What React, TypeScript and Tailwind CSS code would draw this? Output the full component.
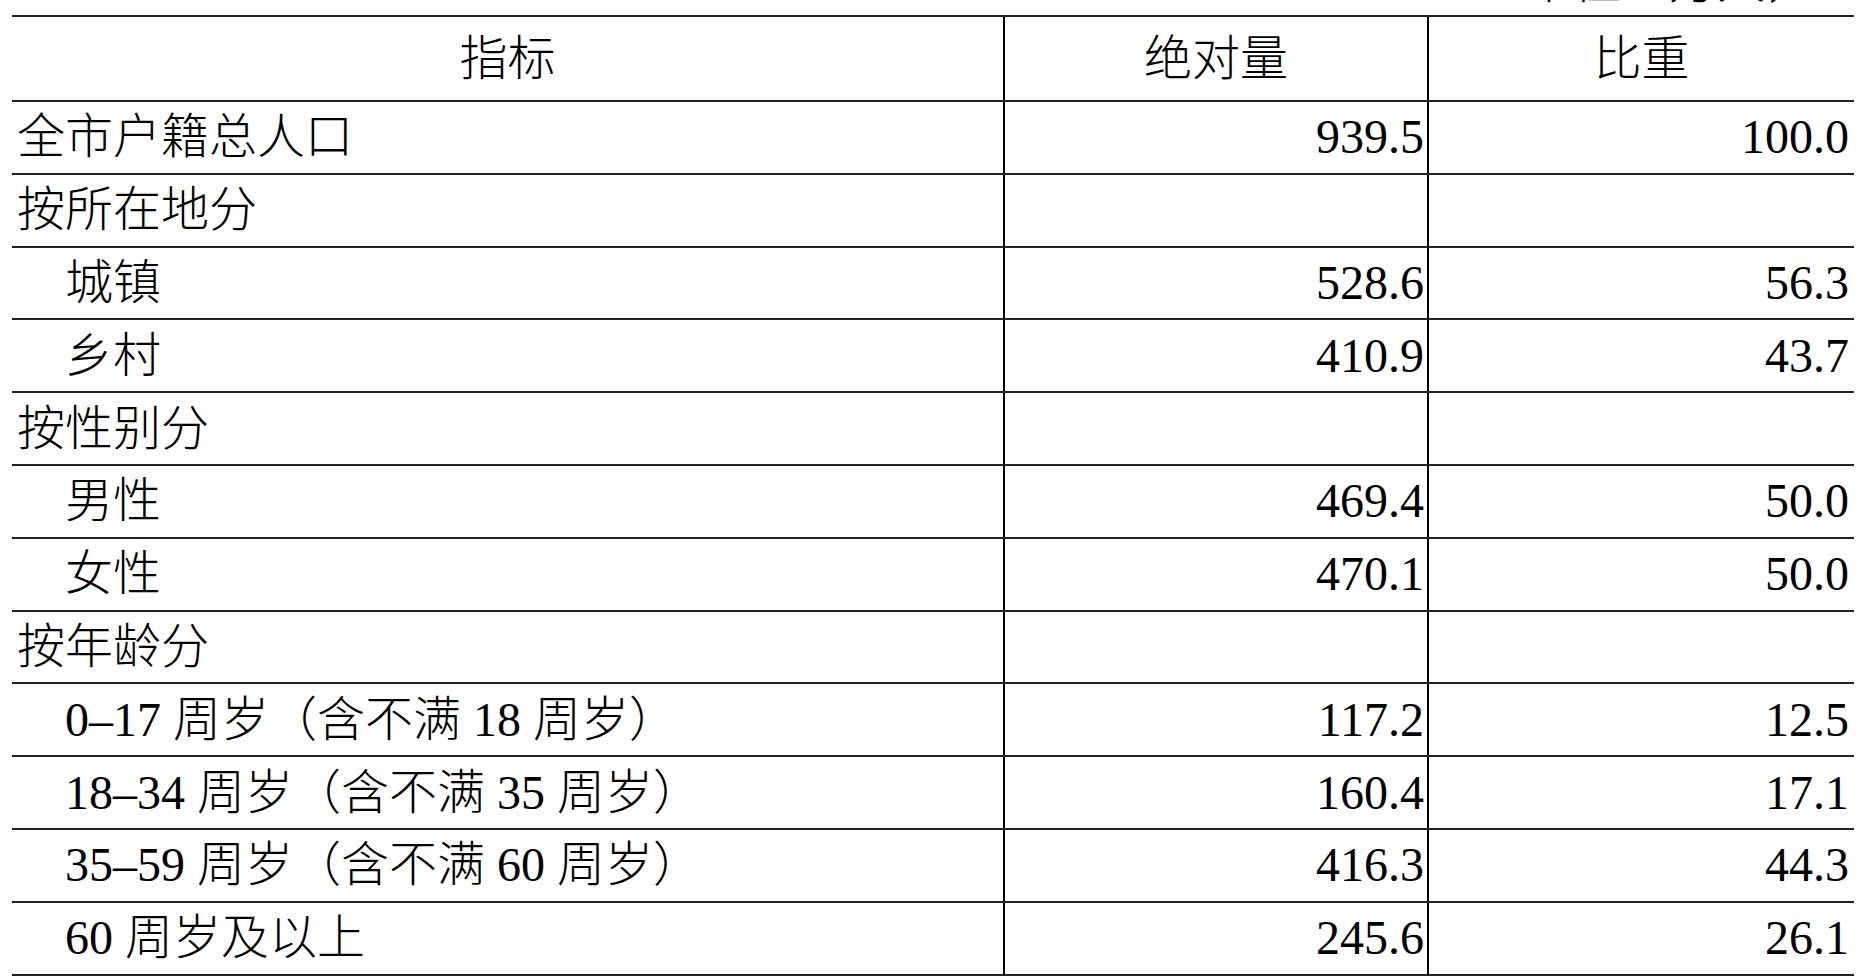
import React from "react";

type Row = {
  label: string;
  indent?: boolean;
  amount?: string;
  share?: string;
};

const rows: Row[] = [
  { label: "全市户籍总人口", amount: "939.5", share: "100.0" },
  { label: "按所在地分" },
  { label: "城镇", indent: true, amount: "528.6", share: "56.3" },
  { label: "乡村", indent: true, amount: "410.9", share: "43.7" },
  { label: "按性别分" },
  { label: "男性", indent: true, amount: "469.4", share: "50.0" },
  { label: "女性", indent: true, amount: "470.1", share: "50.0" },
  { label: "按年龄分" },
  { label: "0–17 周岁（含不满 18 周岁）", indent: true, amount: "117.2", share: "12.5" },
  { label: "18–34 周岁（含不满 35 周岁）", indent: true, amount: "160.4", share: "17.1" },
  { label: "35–59 周岁（含不满 60 周岁）", indent: true, amount: "416.3", share: "44.3" },
  { label: "60 周岁及以上", indent: true, amount: "245.6", share: "26.1" },
];

const font = "font-['Liberation_Serif','Noto_Sans_CJK_SC',serif]";

export default function App() {
  return (
    <div className={`h-[976px] w-[1863px] overflow-hidden bg-white text-black ${font} text-[48px] leading-none`}>
      {/* caption, mostly cut off by the top of the page */}
      <div className="flex h-[15px] items-end justify-end overflow-hidden pr-[10px]">
        <span className="mb-[9px] font-light">单位：万人，%</span>
      </div>

      <div className="ml-[12px] w-[1842px] border-t-2 border-[#222]">
        {/* Header */}
        <div className="flex h-[85px] border-b-2 border-[#222]">
          <div className="flex w-[993px] items-center justify-center border-r-2 border-black font-light">
            指标
          </div>
          <div className="flex w-[424px] items-center justify-center border-r-2 border-black font-light">
            绝对量
          </div>
          <div className="flex flex-1 items-center justify-center font-light">比重</div>
        </div>

        {/* Body */}
        {rows.map((row) => (
          <div key={row.label} className="flex h-[72.8px] border-b-2 border-[#222]">
            <div
              className={`flex w-[993px] items-center border-r-2 border-black font-light ${
                row.indent ? "pl-[53px]" : "pl-[5px]"
              }`}
            >
              {row.label}
            </div>
            <div className="flex w-[424px] items-center justify-end border-r-2 border-black pr-[3px]">
              {row.amount}
            </div>
            <div className="flex flex-1 items-center justify-end pr-[5px]">{row.share}</div>
          </div>
        ))}
      </div>
    </div>
  );
}
